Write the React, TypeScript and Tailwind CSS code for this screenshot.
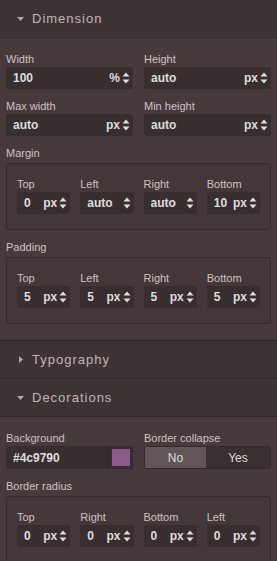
import { ReactNode } from 'react';

const Arrows = () => (
  <svg width="8" height="12" viewBox="0 0 8 12" className="shrink-0">
    <path d="M4 0.5 L7.5 4.5 L0.5 4.5 Z" fill="#ddd" />
    <path d="M4 11.5 L7.5 7.5 L0.5 7.5 Z" fill="#ddd" />
  </svg>
);

const Caret = ({ open }: { open: boolean }) =>
  open ? (
    <svg width="7" height="4" viewBox="0 0 7 4"><path d="M0 0 L7 0 L3.5 4 Z" fill="#b9a5a6" /></svg>
  ) : (
    <svg width="4" height="7" viewBox="0 0 4 7"><path d="M0 0 L4 3.5 L0 7 Z" fill="#b9a5a6" /></svg>
  );

const SectorHeader = ({ title, open }: { title: string; open: boolean }) => (
  <div className="h-[38px] flex items-center bg-[#3d3234] border-b border-[#342a2c]">
    <div className="w-[33px] flex justify-center pl-[8px]">
      <Caret open={open} />
    </div>
    <span className="text-[13px] tracking-[1px] text-[#c6b2b4] ml-[-1px]">{title}</span>
  </div>
);

const Label = ({ children }: { children: ReactNode }) => (
  <div className="h-[16px] leading-[16px] text-[11px] text-[#d2c0c2]">{children}</div>
);

const NumberInput = ({ value, unit }: { value: string; unit?: string }) => (
  <div className="h-[22px] flex items-center bg-[#382e30] rounded-[2px] pl-[7px] pr-[3px]">
    <span className="flex-1 text-[12px] font-bold text-[#ddd] truncate">{value}</span>
    {unit && <span className="text-[12px] font-bold text-[#ddd] mr-[2px]">{unit}</span>}
    <Arrows />
  </div>
);

const Field = ({ label, value, unit }: { label: string; value: string; unit?: string }) => (
  <div>
    <Label>{label}</Label>
    <NumberInput value={value} unit={unit} />
  </div>
);

const Composite = ({ label, items }: { label: string; items: { l: string; v: string; u?: string }[] }) => (
  <div>
    <Label>{label}</Label>
    <div className="mt-[2px] border border-[#342a2c] bg-[#433739] rounded-[2px] px-[10px] pt-[12px] pb-[15px] grid grid-cols-4 gap-x-[10px]">
      {items.map((it) => (
        <div key={it.l}>
          <Label>{it.l}</Label>
          <NumberInput value={it.v} unit={it.u} />
        </div>
      ))}
    </div>
  </div>
);

export default function App() {
  return (
    <div className="w-[277px] h-[561px] overflow-hidden bg-[#463a3c] font-['Liberation_Sans',Arial,sans-serif]">
      <SectorHeader title="Dimension" open />
      <div className="px-[6px] pt-[13px] pb-[16px] flex flex-col gap-[9px] border-b border-[#342a2c]">
        <div className="grid grid-cols-2 gap-x-[11px]">
          <Field label="Width" value="100" unit="%" />
          <Field label="Height" value="auto" unit="px" />
        </div>
        <div className="grid grid-cols-2 gap-x-[11px]">
          <Field label="Max width" value="auto" unit="px" />
          <Field label="Min height" value="auto" unit="px" />
        </div>
        <Composite
          label="Margin"
          items={[
            { l: 'Top', v: '0', u: 'px' },
            { l: 'Left', v: 'auto' },
            { l: 'Right', v: 'auto' },
            { l: 'Bottom', v: '10', u: 'px' },
          ]}
        />
        <Composite
          label="Padding"
          items={[
            { l: 'Top', v: '5', u: 'px' },
            { l: 'Left', v: '5', u: 'px' },
            { l: 'Right', v: '5', u: 'px' },
            { l: 'Bottom', v: '5', u: 'px' },
          ]}
        />
      </div>
      <SectorHeader title="Typography" open={false} />
      <SectorHeader title="Decorations" open />
      <div className="px-[6px] pt-[13px] flex flex-col gap-[9px]">
        <div className="grid grid-cols-2 gap-x-[11px]">
          <div>
            <Label>Background</Label>
            <div className="h-[23px] flex items-center bg-[#382e30] rounded-[2px] pl-[7px]">
              <span className="flex-1 text-[12px] font-bold text-[#ddd]">#4c9790</span>
              <div className="h-full border-l border-[#2e2527] flex items-center px-[3px]">
                <div className="w-[18px] h-[17px] bg-[#8c5a8b]" />
              </div>
            </div>
          </div>
          <div>
            <Label>Border collapse</Label>
            <div className="h-[23px] flex rounded-[2px] bg-[#3a2f31] border border-[#342a2c] text-[12px] text-[#ddd]">
              <div className="w-[61px] flex items-center justify-center bg-[#625557]">No</div>
              <div className="flex-1 flex items-center justify-center">Yes</div>
            </div>
          </div>
        </div>
        <Composite
          label="Border radius"
          items={[
            { l: 'Top', v: '0', u: 'px' },
            { l: 'Right', v: '0', u: 'px' },
            { l: 'Bottom', v: '0', u: 'px' },
            { l: 'Left', v: '0', u: 'px' },
          ]}
        />
      </div>
    </div>
  );
}
